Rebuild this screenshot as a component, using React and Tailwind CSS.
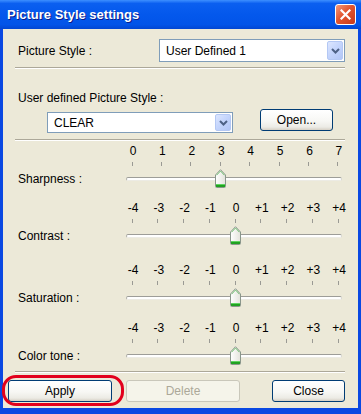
import React from "react";

const sharpMarks = ["0", "1", "2", "3", "4", "5", "6", "7"];
const fineMarks = ["-4", "-3", "-2", "-1", "0", "+1", "+2", "+3", "+4"];

function Chevron() {
  return (
    <svg width="9" height="6" viewBox="0 0 9 6">
      <path d="M1 1 L4.5 4.5 L8 1" fill="none" stroke="#4d6185" strokeWidth="2" />
    </svg>
  );
}

function Combo({ value, className }) {
  return (
    <div className={"flex items-stretch bg-white border border-[#7f9db9] p-px " + className}>
      <div className="flex-1 flex items-center pl-[5px] text-[12px] text-black">{value}</div>
      <div className="w-[16px] flex items-center justify-center rounded-[2px] border border-[#b4c8f4] bg-[linear-gradient(135deg,#dce6fe_0%,#c3d4fc_50%,#b2c6f6_100%)]">
        <Chevron />
      </div>
    </div>
  );
}

function XPButton({ children, disabled, className }) {
  const look = disabled
    ? "border-[#c9c7ba] bg-[#f5f4ea] text-[#aca899]"
    : "border-[#003c74] text-black bg-[linear-gradient(180deg,#ffffff_0%,#f7f7f4_55%,#ecebe5_85%,#d6d0c5_100%)]";
  return (
    <div className={"flex items-center justify-center rounded-[3px] border text-[12px] " + look + " " + className}>
      {children}
    </div>
  );
}

function Thumb() {
  return (
    <svg width="11" height="19" viewBox="0 0 11 19">
      <defs>
        <linearGradient id="thumbFill" x1="0" x2="1" y1="0" y2="0">
          <stop offset="0" stopColor="#ffffff" />
          <stop offset="1" stopColor="#e3e3dc" />
        </linearGradient>
      </defs>
      <path
        d="M0.5 6 L5.5 0.7 L10.5 6 V17.5 Q10.5 18.5 9.5 18.5 H1.5 Q0.5 18.5 0.5 17.5 Z"
        fill="url(#thumbFill)"
        stroke="#8a968b"
      />
      <path d="M1.6 6.2 L5.5 2 L9.4 6.2" fill="none" stroke="#74c474" />
      <rect x="1" y="15" width="9" height="3" fill="#21a221" />
      <rect x="1" y="15" width="9" height="1" fill="#5ed45e" />
    </svg>
  );
}

function Slider({ label, marks, value, className }) {
  const step = 206 / (marks.length - 1);
  const left = 6 + value * step - 5.5;
  return (
    <div className={"flex " + className}>
      <div className="w-[111px] pl-[3px] self-end h-[19px] pt-[1px] flex items-center text-[12px]">{label}</div>
      <div className="w-[216px] flex flex-col">
        <div className="flex justify-between pl-[6px] pr-[4px]">
          {marks.map((m) => (
            <div key={m} className="w-0 flex flex-col items-center">
              <div className="h-[14px] leading-[14px] whitespace-nowrap text-[12px] pl-[2px]">{m}</div>
              <div className="mt-[4px] w-px h-[4px] bg-[#9a9a94]" />
            </div>
          ))}
        </div>
        <div className="relative mt-[3px] h-[19px] flex items-center">
          <div className="w-full h-[4px] rounded-[2px] bg-white border border-t-[#9d9d98] border-l-[#b0b0aa] border-r-[#d6d6d0] border-b-[#ecebe4]" />
          <div className="absolute top-0" style={{ left }}>
            <Thumb />
          </div>
        </div>
      </div>
    </div>
  );
}

function Separator({ className }) {
  return <div className={"h-[2px] border-t border-[#aca899] bg-white " + className} />;
}

export default function App() {
  return (
    <div className="w-[361px] h-[414px] flex flex-col bg-[#0a48e2] [font-family:'Liberation_Sans',Arial,sans-serif] text-black select-none">
      <div className="h-[29px] flex items-center pl-[7px] pr-[5px] bg-[linear-gradient(180deg,#3d8fff_0%,#0b5ff0_12%,#0458ec_50%,#0254e8_85%,#0246d2_100%)]">
        <div className="flex-1 text-white font-bold text-[13px] [text-shadow:1px_1px_#0c1d8a]">Picture Style settings</div>
        <div className="w-[21px] h-[21px] rounded-[3px] border border-white flex items-center justify-center bg-[linear-gradient(135deg,#f29a7c_0%,#e2552f_45%,#c8391a_100%)]">
          <svg width="11" height="11" viewBox="0 0 11 11">
            <path d="M1.5 1.5 L9.5 9.5 M9.5 1.5 L1.5 9.5" stroke="#ffffff" strokeWidth="2.2" strokeLinecap="square" />
          </svg>
        </div>
      </div>

      <div className="flex-1 mx-[3px] mb-[6px] bg-[#ece9d8] pl-[12px] pr-[13px] pt-[10px] flex flex-col">
        <div className="flex items-center">
          <div className="flex-1 pl-[3px] text-[12px]">Picture Style :</div>
          <Combo value="User Defined 1" className="w-[186px] h-[23px]" />
        </div>

        <Separator className="mt-[5px]" />

        <div className="mt-[22px] pl-[3px] h-[14px] leading-[14px] text-[12px]">User defined Picture Style :</div>

        <div className="mt-[4px] flex items-start h-[24px]">
          <Combo value="CLEAR" className="ml-[32px] mt-[3px] w-[186px] h-[21px]" />
          <XPButton className="ml-[27px] w-[73px] h-[22px]">Open...</XPButton>
        </div>

        <Separator className="mt-[6px]" />

        <Slider label="Sharpness :" marks={sharpMarks} value={3} className="mt-[3px]" />
        <Slider label="Contrast :" marks={fineMarks} value={4} className="mt-[13px]" />
        <Slider label="Saturation :" marks={fineMarks} value={4} className="mt-[18px]" />
        <Slider label="Color tone :" marks={fineMarks} value={4} className="mt-[14px]" />

        <Separator className="mt-[6px]" />

        <div className="mt-[7px] -ml-[7px] flex h-[22px]">
          <div className="relative">
            <XPButton className="w-[104px] h-[22px]">Apply</XPButton>
            <div className="absolute -left-[6px] -right-[12px] -top-[5px] -bottom-[4px] rounded-[14px] border-[3px] border-[#e2001c]" />
          </div>
          <XPButton disabled className="ml-[14px] w-[114px] h-[22px]">Delete</XPButton>
          <XPButton className="ml-auto w-[73px] h-[22px]">Close</XPButton>
        </div>
      </div>
    </div>
  );
}
